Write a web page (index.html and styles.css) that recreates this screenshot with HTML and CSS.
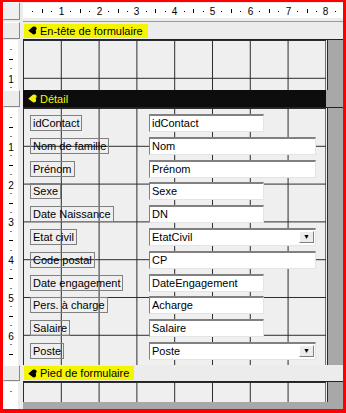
FILE: index.html
```html
<!DOCTYPE html>
<html lang="fr">
<head>
<meta charset="utf-8" />
<title>Formulaire Contacts - Mode Création</title>
<link rel="stylesheet" href="styles.css">
</head>
<body>
<div class="window">
  <!-- Règle du haut -->
  <div class="corner"></div>
  <div class="hruler"><svg id="hRuler" width="320" height="20"></svg></div>

  <!-- En-tête -->
  <div class="sel"><span class="selbox"></span></div>
  <div class="bar">
    <span class="tag"><svg class="ico" viewBox="0 0 10 10"><path d="M0.3 5.2 L5 1 C7 -0.2 9.8 0.6 9.6 3 C9.5 4 9 4.6 8.4 5 C9.6 6 9.2 9.6 6 9.4 Z"/></svg>En-tête de formulaire</span>
  </div>
  <div class="vruler"><svg class="vr" data-len="50" width="17" height="50"></svg></div>
  <div class="section"><div class="canvas"></div><div class="outside"></div></div>

  <!-- Détail -->
  <div class="sel"><span class="selbox"></span></div>
  <div class="bar bar-detail">
    <span class="tag tag-detail"><svg class="ico" viewBox="0 0 10 10"><path d="M0.3 5.2 L5 1 C7 -0.2 9.8 0.6 9.6 3 C9.5 4 9 4.6 8.4 5 C9.6 6 9.2 9.6 6 9.4 Z"/></svg>Détail</span>
  </div>
  <div class="vruler"><svg class="vr" data-len="257" width="17" height="257"></svg></div>
  <div class="section">
    <div class="canvas detail">
      <div class="row"><span class="lbl">idContact</span><span class="txt">idContact</span></div>
      <div class="row"><span class="lbl">Nom de famille</span><span class="txt long">Nom</span></div>
      <div class="row"><span class="lbl">Prénom</span><span class="txt long">Prénom</span></div>
      <div class="row"><span class="lbl">Sexe</span><span class="txt">Sexe</span></div>
      <div class="row"><span class="lbl">Date Naissance</span><span class="txt">DN</span></div>
      <div class="row"><span class="lbl">Etat civil</span><span class="txt long combo">EtatCivil<span class="drop">&#9660;</span></span></div>
      <div class="row"><span class="lbl">Code postal</span><span class="txt long">CP</span></div>
      <div class="row"><span class="lbl">Date engagement</span><span class="txt">DateEngagement</span></div>
      <div class="row"><span class="lbl">Pers. à charge</span><span class="txt">Acharge</span></div>
      <div class="row"><span class="lbl">Salaire</span><span class="txt">Salaire</span></div>
      <div class="row"><span class="lbl">Poste</span><span class="txt long combo">Poste<span class="drop">&#9660;</span></span></div>
    </div>
    <div class="outside"></div>
  </div>

  <!-- Pied -->
  <div class="sel"><span class="selbox"></span></div>
  <div class="bar">
    <span class="tag"><svg class="ico" viewBox="0 0 10 10"><path d="M0.3 5.2 L5 1 C7 -0.2 9.8 0.6 9.6 3 C9.5 4 9 4.6 8.4 5 C9.6 6 9.2 9.6 6 9.4 Z"/></svg>Pied de formulaire</span>
  </div>
  <div class="vruler"><svg class="vr" data-len="20" width="17" height="20"></svg></div>
  <div class="section"><div class="canvas"></div><div class="outside"></div></div>

  <div class="vruler"><svg class="vr" data-len="0" width="17" height="7"></svg></div>
  <div class="bottom"></div>
</div>

<script>
  // graduations : 1 cm = 37.8 px, repère tous les quarts
  const NS = 'http://www.w3.org/2000/svg';
  const CM = 37.8;
  function el(svg, name, attrs, txt){
    const e = document.createElementNS(NS, name);
    for (const k in attrs) e.setAttribute(k, attrs[k]);
    if (txt) e.textContent = txt;
    svg.appendChild(e);
  }

  const h = document.getElementById('hRuler');
  el(h, 'rect', {x:0, y:1, width:320, height:15, fill:'#fff'});
  for (let i = 1; i < 36; i++){
    const x = Math.round(i * CM / 4) + 0.5;
    const q = i % 4;
    if (q === 0) el(h, 'text', {x:x, y:13, 'text-anchor':'middle', class:'num'}, String(i / 4));
    else if (q === 2) el(h, 'line', {x1:x, y1:7, x2:x, y2:11, stroke:'#000'});
    else el(h, 'rect', {x:x - 0.5, y:9, width:1, height:1, fill:'#000'});
  }

  document.querySelectorAll('.vr').forEach(function(v){
    const len = +v.dataset.len;
    el(v, 'rect', {x:0, y:0, width:15, height:v.getAttribute('height'), fill:'#fff'});
    for (let i = 1; i * CM / 4 < len - 2; i++){
      const y = Math.round(i * CM / 4) + 0.5;
      const q = i % 4;
      if (q === 0) el(v, 'text', {x:8, y:y + 4, 'text-anchor':'middle', class:'num'}, String(i / 4));
      else if (q === 2) el(v, 'line', {x1:6, y1:y, x2:10, y2:y, stroke:'#000'});
      else el(v, 'rect', {x:7.5, y:y - 0.5, width:1, height:1, fill:'#000'});
    }
  });
</script>
</body>
</html>
```

FILE: styles.css
```css
html,body{margin:0;width:346px;height:413px;overflow:hidden;background:#fff}

/* fenêtre de création, cadre rouge */
.window{
  box-sizing:border-box;width:346px;height:413px;
  border:solid #f00;border-width:2px 3px 4px 3px;
  display:grid;grid-template-columns:20px 320px;
  grid-template-rows:20px 18px 50px 18px 257px 17px 20px 1fr;
  background:#ececec;
  font-family:"Liberation Sans",Arial,sans-serif;font-size:11px;color:#000
}

/* colonne de gauche */
.corner{margin:0 3px 2px 0;background:#f0f0f0;border:1px solid;border-color:#fff #888 #888 #fff}
.sel{padding:0 3px 1px 0;display:flex}
.selbox{flex:1;background:#ececec;border:1px solid;border-color:#fff #888 #888 #fff}
.vruler{border-right:3px solid #ececec;background:#ececec}
.vruler svg{display:block}
.num{font-family:"Liberation Sans",Arial,sans-serif;font-size:10px;fill:#000}

/* règle du haut */
.hruler{background:#ececec;border-bottom:1px solid #9a9a9a}
.hruler svg{display:block}

/* barres de section */
.bar{background:#ececec;display:flex;align-items:center;padding-left:1px;border-bottom:1px solid #222}
.tag{background:#f6f500;height:14px;display:flex;align-items:center;gap:3px;padding:0 5px 0 4px;font-size:11px}
.ico{width:9px;height:9px;fill:#000}
.bar-detail{background:linear-gradient(to right,#0d0d0d 303px,#a8a8a8 303px)}
.tag-detail{background:none;color:#f4f400}
.tag-detail .ico{fill:#f4f400}

/* sections avec grille */
.section{display:flex;min-height:0}
.canvas{
  width:303px;flex:none;
  background-color:#efefef;
  background-image:linear-gradient(to right,#2b2b2b 1px,transparent 1px),linear-gradient(to bottom,#2b2b2b 1px,transparent 1px);
  background-size:37.8px 37.8px
}
.outside{flex:1;background:#a8a8a8;border-left:1px solid #ececec;box-shadow:inset 1px 0 0 #2b2b2b}
.bottom{background:#a8a8a8}

/* contrôles */
.detail{display:flex;flex-direction:column;gap:4.8px;padding:6px 0 0 7px;box-sizing:border-box}
.row{display:grid;grid-template-columns:119px auto;height:18px;align-items:center}
.lbl{justify-self:start;border:1px solid #808080;padding:0 2px;height:14px;line-height:14px}
.txt{position:relative;box-sizing:border-box;width:115px;height:18px;background:#fff;
  border:solid;border-width:2px 1px 1px 1px;border-color:#808080 #e4e4e4 #e4e4e4 #808080;
  padding-left:2px;line-height:15px;white-space:nowrap}
.long{width:167px}
.drop{position:absolute;right:1px;top:1px;width:15px;height:12px;box-sizing:border-box;
  background:#ececec;border:1px solid;border-color:#fff #808080 #808080 #fff;
  font-size:7px;line-height:10px;text-align:center}
```
